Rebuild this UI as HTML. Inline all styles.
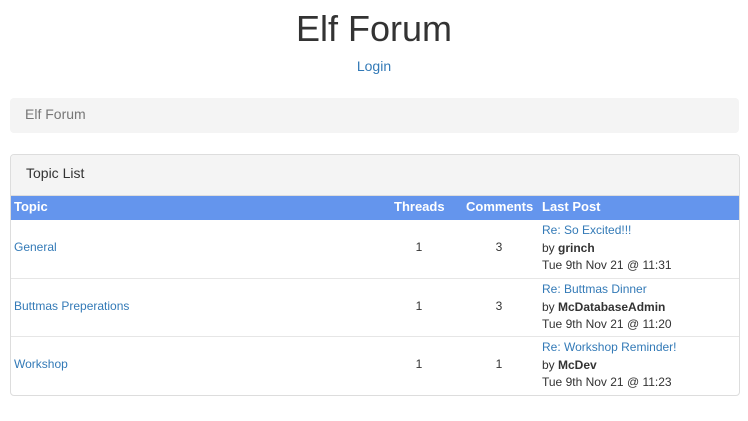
<!DOCTYPE html>
<html><head><style>
*{margin:0;padding:0;box-sizing:border-box}
body{width:748px;height:421px;background:#fff;font-family:"Liberation Sans",Arial,sans-serif;color:#333;position:relative;overflow:hidden;font-size:12px}
.a{position:absolute;white-space:nowrap}
a,.l{color:#337ab7;text-decoration:none}
.c{text-align:center}
b{font-weight:bold}
</style></head><body>
<div class="a c" style="left:0;width:748px;top:7px;font-size:36px;line-height:44px;color:#333">Elf Forum</div>
<div class="a c l" style="left:0;width:748px;top:57px;font-size:14px;line-height:18px">Login</div>
<div class="a" style="left:10px;top:98px;width:729px;height:35px;background:#f4f4f4;border-radius:4px"></div>
<div class="a" style="left:25px;top:105px;font-size:14px;line-height:18px;color:#777">Elf Forum</div>
<div class="a" style="left:10px;top:154px;width:730px;height:242px;border:1px solid #ddd;border-radius:4px;overflow:hidden">
 <div style="height:41px;background:#f4f4f4;border-bottom:1px solid #ddd"></div>
 <div style="height:24px;background:#6495ed"></div>
</div>
<div class="a" style="left:26px;top:164px;font-size:14px;line-height:18px">Topic List</div>
<div class="a" style="left:14px;top:199px;font-size:13px;line-height:16px;color:#fff;font-weight:bold">Topic</div>
<div class="a" style="left:394px;top:199px;font-size:13px;line-height:16px;color:#fff;font-weight:bold">Threads</div>
<div class="a" style="left:466px;top:199px;font-size:13px;line-height:16px;color:#fff;font-weight:bold">Comments</div>
<div class="a" style="left:542px;top:199px;font-size:13px;line-height:16px;color:#fff;font-weight:bold">Last Post</div>
<div class="a" style="left:11px;top:278px;width:728px;height:1px;background:#e6e6e6"></div>
<div class="a" style="left:11px;top:336px;width:728px;height:1px;background:#e6e6e6"></div>

<div class="a l" style="left:14px;top:239px;line-height:16px">General</div>
<div class="a c" style="left:399px;width:40px;top:239px;line-height:16px">1</div>
<div class="a c" style="left:479px;width:40px;top:239px;line-height:16px">3</div>
<div class="a" style="left:542px;top:222px;line-height:17.5px"><span class="l">Re: So Excited!!!</span><br>by <b>grinch</b><br>Tue 9th Nov 21 @ 11:31</div>

<div class="a l" style="left:14px;top:298px;line-height:16px">Buttmas Preperations</div>
<div class="a c" style="left:399px;width:40px;top:298px;line-height:16px">1</div>
<div class="a c" style="left:479px;width:40px;top:298px;line-height:16px">3</div>
<div class="a" style="left:542px;top:281px;line-height:17.5px"><span class="l">Re: Buttmas Dinner</span><br>by <b>McDatabaseAdmin</b><br>Tue 9th Nov 21 @ 11:20</div>

<div class="a l" style="left:14px;top:356px;line-height:16px">Workshop</div>
<div class="a c" style="left:399px;width:40px;top:356px;line-height:16px">1</div>
<div class="a c" style="left:479px;width:40px;top:356px;line-height:16px">1</div>
<div class="a" style="left:542px;top:339px;line-height:17.5px"><span class="l">Re: Workshop Reminder!</span><br>by <b>McDev</b><br>Tue 9th Nov 21 @ 11:23</div>
</body></html>
